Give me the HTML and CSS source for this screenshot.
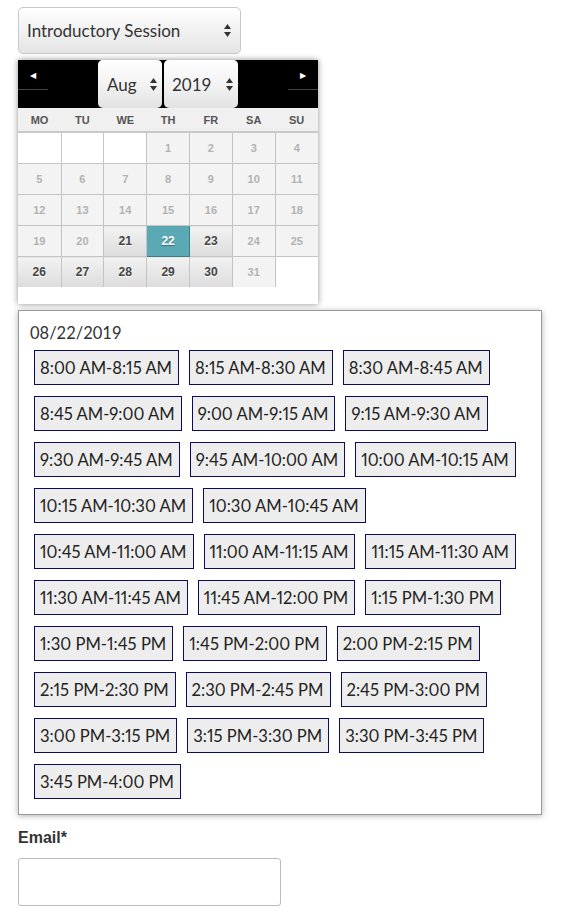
FILE: index.html
```html
<!DOCTYPE html>
<html>
<head>
<meta charset="utf-8">
<link rel="stylesheet" href="styles.css">
</head>
<body>
<div class="page">
  <div class="select service">
    <span>Introductory Session</span>
    <svg class="arrows" width="7" height="13" viewBox="0 0 7 13"><polygon points="0,5 3.5,0 7,5" fill="#333"/><polygon points="0,8 3.5,13 7,8" fill="#333"/></svg>
  </div>

  <div class="datepicker">
    <div class="dp-header">
      <div class="nav prev"><span class="tri">&#9664;</span></div>
      <div class="dp-selects">
        <div class="select small month"><span>Aug</span><svg class="arrows" width="7" height="13" viewBox="0 0 7 13"><polygon points="0,5 3.5,0 7,5" fill="#333"/><polygon points="0,8 3.5,13 7,8" fill="#333"/></svg></div>
        <div class="select small year"><span>2019</span><svg class="arrows" width="7" height="13" viewBox="0 0 7 13"><polygon points="0,5 3.5,0 7,5" fill="#333"/><polygon points="0,8 3.5,13 7,8" fill="#333"/></svg></div>
      </div>
      <div class="nav next"><span class="tri">&#9654;</span></div>
    </div>
    <table class="cal">
      <thead>
        <tr><th>MO</th><th>TU</th><th>WE</th><th>TH</th><th>FR</th><th>SA</th><th>SU</th></tr>
      </thead>
      <tbody>
        <tr><td class="empty"></td><td class="empty"></td><td class="empty"></td><td class="off">1</td><td class="off">2</td><td class="off">3</td><td class="off">4</td></tr>
        <tr><td class="off">5</td><td class="off">6</td><td class="off">7</td><td class="off">8</td><td class="off">9</td><td class="off">10</td><td class="off">11</td></tr>
        <tr><td class="off">12</td><td class="off">13</td><td class="off">14</td><td class="off">15</td><td class="off">16</td><td class="off">17</td><td class="off">18</td></tr>
        <tr><td class="off">19</td><td class="off">20</td><td class="on">21</td><td class="sel">22</td><td class="on">23</td><td class="off">24</td><td class="off">25</td></tr>
        <tr class="last"><td class="on">26</td><td class="on">27</td><td class="on">28</td><td class="on">29</td><td class="on">30</td><td class="off">31</td><td class="empty end"></td></tr>
      </tbody>
    </table>
  </div>

  <div class="slots">
    <div class="slot-date">08/22/2019</div>
    <div class="slot-list">
      <span class="slot">8:00 AM-8:15 AM</span>
      <span class="slot">8:15 AM-8:30 AM</span>
      <span class="slot">8:30 AM-8:45 AM</span>
      <span class="slot">8:45 AM-9:00 AM</span>
      <span class="slot">9:00 AM-9:15 AM</span>
      <span class="slot">9:15 AM-9:30 AM</span>
      <span class="slot">9:30 AM-9:45 AM</span>
      <span class="slot">9:45 AM-10:00 AM</span>
      <span class="slot">10:00 AM-10:15 AM</span>
      <span class="slot">10:15 AM-10:30 AM</span>
      <span class="slot">10:30 AM-10:45 AM</span>
      <span class="slot">10:45 AM-11:00 AM</span>
      <span class="slot">11:00 AM-11:15 AM</span>
      <span class="slot">11:15 AM-11:30 AM</span>
      <span class="slot">11:30 AM-11:45 AM</span>
      <span class="slot">11:45 AM-12:00 PM</span>
      <span class="slot">1:15 PM-1:30 PM</span>
      <span class="slot">1:30 PM-1:45 PM</span>
      <span class="slot">1:45 PM-2:00 PM</span>
      <span class="slot">2:00 PM-2:15 PM</span>
      <span class="slot">2:15 PM-2:30 PM</span>
      <span class="slot">2:30 PM-2:45 PM</span>
      <span class="slot">2:45 PM-3:00 PM</span>
      <span class="slot">3:00 PM-3:15 PM</span>
      <span class="slot">3:15 PM-3:30 PM</span>
      <span class="slot">3:30 PM-3:45 PM</span>
      <span class="slot">3:45 PM-4:00 PM</span>
    </div>
  </div>

  <label class="email-label">Email*</label>
  <div class="email-input"></div>
</div>
</body>
</html>
```

FILE: styles.css
```css
html, body {
  margin: 0;
  padding: 0;
  background: #fff;
}

.page {
  padding: 7px 0 0 18px;
  font-family: Lato, "Open Sans", sans-serif;
  color: #333;
}

.select {
  box-sizing: border-box;
  display: flex;
  align-items: center;
  justify-content: space-between;
  border: 1px solid #c8c8c8;
  border-radius: 5px;
  background: linear-gradient(#ffffff, #f4f4f4 40%, #e4e4e4);
  box-shadow: inset 0 1px 0 #fff;
  font-size: 17px;
  color: #333;
}

.select.service {
  width: 223px;
  height: 47px;
  padding: 0 9px 0 8px;
}

.datepicker {
  width: 300px;
  margin-top: 6px;
  padding-bottom: 17px;
  background: #fff;
  box-shadow: 0 0 6px rgba(0, 0, 0, 0.45);
}

.dp-header {
  display: flex;
  height: 48px;
  background: #000;
  justify-content: space-between;
}

.nav {
  width: 30px;
  height: 30px;
  border-bottom: 1px solid #444;
  color: #fff;
  font-size: 8px;
  display: flex;
  justify-content: center;
  padding-top: 11px;
  box-sizing: border-box;
  line-height: 1;
}

.dp-selects {
  display: flex;
  gap: 2px;
}

.select.small {
  height: 48px;
  padding: 0 5px 0 9px;
  border: none;
  border-radius: 5px;
  background: linear-gradient(#ffffff, #f3f3f3 50%, #e2e2e2);
}

.select.month { width: 64px; }
.select.year { width: 74px; padding-left: 8px; }

.cal {
  width: 300px;
  border-collapse: collapse;
  table-layout: fixed;
  font-family: "Liberation Sans", Arial, sans-serif;
  font-weight: bold;
}

.cal th {
  height: 23px;
  padding: 0;
  background: #f0f0f0;
  color: #555;
  font-size: 11px;
  border-bottom: 2px solid #c8c8c8;
}

.cal th:first-child,
.cal td:first-child {
  width: 43px;
}

.cal td {
  height: 30px;
  padding: 0;
  text-align: center;
  font-size: 11px;
  border-right: 1px solid #c4c4c4;
  border-bottom: 1px solid #c4c4c4;
}

.cal td:last-child {
  border-right: none;
}

.cal td.empty {
  background: #fff;
}

.cal td.off {
  background: #f3f3f3;
  color: #b2b2b2;
}

.cal td.on {
  background: linear-gradient(#f2f2f2, #dcdcdc);
  color: #444;
  font-size: 12px;
  text-shadow: 0 1px 0 #fff;
}

.cal td.sel {
  background: #5ca9b6;
  border: 1px solid #3b7f8b;
  color: #fff;
  font-size: 12px;
  text-shadow: 0 1px 1px #2f6f7a;
}

.cal tr.last td {
  border-bottom: none;
}

.cal td.end {
  border-left: none;
}

.slots {
  box-sizing: border-box;
  width: 524px;
  margin-top: 6px;
  padding: 11px 11px 15px 11px;
  border: 1px solid #9a9a9a;
  box-shadow: 0 1px 6px rgba(0, 0, 0, 0.3);
  background: #fff;
}

.slot-date {
  font-size: 16.5px;
  line-height: 22px;
  color: #333;
}

.slot-list {
  display: flex;
  flex-wrap: wrap;
  column-gap: 10px;
  row-gap: 11px;
  margin-top: 6px;
  padding-left: 4px;
}

.slot {
  box-sizing: border-box;
  height: 35px;
  display: flex;
  align-items: center;
  padding: 0 6px 0 5px;
  border: 1px solid #0c0c5a;
  background: #ededed;
  font-size: 16.6px;
  font-variant-numeric: proportional-nums;
  color: #222;
  white-space: nowrap;
}

.email-label {
  display: block;
  margin-top: 13px;
  font-family: "Liberation Sans", Arial, sans-serif;
  font-weight: bold;
  font-size: 16px;
  line-height: 20px;
  color: #333;
}

.email-input {
  box-sizing: border-box;
  width: 263px;
  height: 48px;
  margin-top: 10px;
  border: 1px solid #bbb;
  border-radius: 3px;
  background: #fff;
}
```
